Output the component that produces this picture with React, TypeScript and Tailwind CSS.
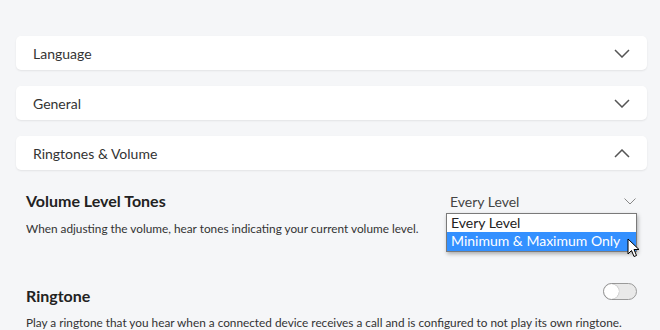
import React from "react";

const sections = ["Language", "General", "Ringtones & Volume"];

const Chevron: React.FC<{ up?: boolean; className?: string }> = ({ up, className }) => (
  <svg width="16" height="9" viewBox="0 0 16 9" className={className} fill="none">
    <path
      d={up ? "M1 8 L8 1 L15 8" : "M1 1 L8 8 L15 1"}
      stroke="currentColor"
      strokeWidth="1.5"
    />
  </svg>
);

const App: React.FC = () => {
  return (
    <div
      className="w-[660px] h-[330px] overflow-hidden bg-[#f5f6f8] text-[#1f1f1f]"
      style={{ fontFamily: "Lato, 'Open Sans', sans-serif" }}
    >
      <div className="flex flex-col gap-4 px-4 pt-9 pr-[13px]">
        {sections.map((name, i) => (
          <div
            key={name}
            className="flex items-center justify-between h-[34px] bg-white rounded-[5px] shadow-[0_1px_2px_rgba(0,0,0,0.08)] pl-[17px] pr-[17px]"
          >
            <span className="text-[14px] text-[#333]">{name}</span>
            <Chevron up={i === 2} className="text-[#555]" />
          </div>
        ))}
      </div>

      {/* Volume level tones */}
      <div className="flex justify-between pl-[26px] pr-[23px] pt-[20px]">
        <div>
          <div className="text-[16px] font-bold leading-[22px] text-[#222]">Volume Level Tones</div>
          <div className="text-[11.8px] mt-[8px] text-[#333]">
            When adjusting the volume, hear tones indicating your current volume level.
          </div>
        </div>
        <div className="relative w-[191px]">
          <div className="flex items-center justify-between h-[22px] pl-[4px] pr-[1px]">
            <span className="text-[14px] text-[#444]">Every Level</span>
            <svg width="12" height="7" viewBox="0 0 12 7" fill="none" className="text-[#888]">
              <path d="M0.5 0.5 L6 6 L11.5 0.5" stroke="currentColor" strokeWidth="1" />
            </svg>
          </div>
          <div className="absolute left-0 top-[23px] w-[191px] bg-white border border-[#7a7a7a] shadow-[1px_2px_4px_rgba(0,0,0,0.3)] text-[14px]">
            <div className="h-[18px] leading-[18px] pl-[4px] text-[#222]">Every Level</div>
            <div className="h-[19px] leading-[18px] pl-[4px] bg-[#3390ff] text-white">Minimum &amp; Maximum Only</div>
            <svg
              width="14"
              height="22"
              viewBox="0 0 14 22"
              className="absolute left-[180px] top-[24px]"
            >
              <path
                d="M1 1 L1 16 L4.5 12.5 L7 18.5 L9.5 17.5 L7 11.5 L12 11.5 Z"
                fill="white"
                stroke="black"
                strokeWidth="1"
                strokeLinejoin="round"
              />
            </svg>
          </div>
        </div>
      </div>

      {/* Ringtone */}
      <div className="pl-[26px] pr-[23px] pt-[47px]">
        <div className="flex justify-between items-center">
          <div className="text-[16px] font-bold leading-[22px] text-[#222]">Ringtone</div>
          <div className="w-[34px] h-[17px] mt-[-8px] rounded-full bg-[#e9e9e9] border border-[#9a9a9a] flex items-center">
            <div className="w-[15px] h-[15px] rounded-full bg-white shadow-[0_0_1px_rgba(0,0,0,0.5)]" />
          </div>
        </div>
        <div className="text-[11.8px] mt-[7px] text-[#333] whitespace-nowrap">
          Play a ringtone that you hear when a connected device receives a call and is configured to not play its own ringtone.
        </div>
      </div>
    </div>
  );
};

export default App;
